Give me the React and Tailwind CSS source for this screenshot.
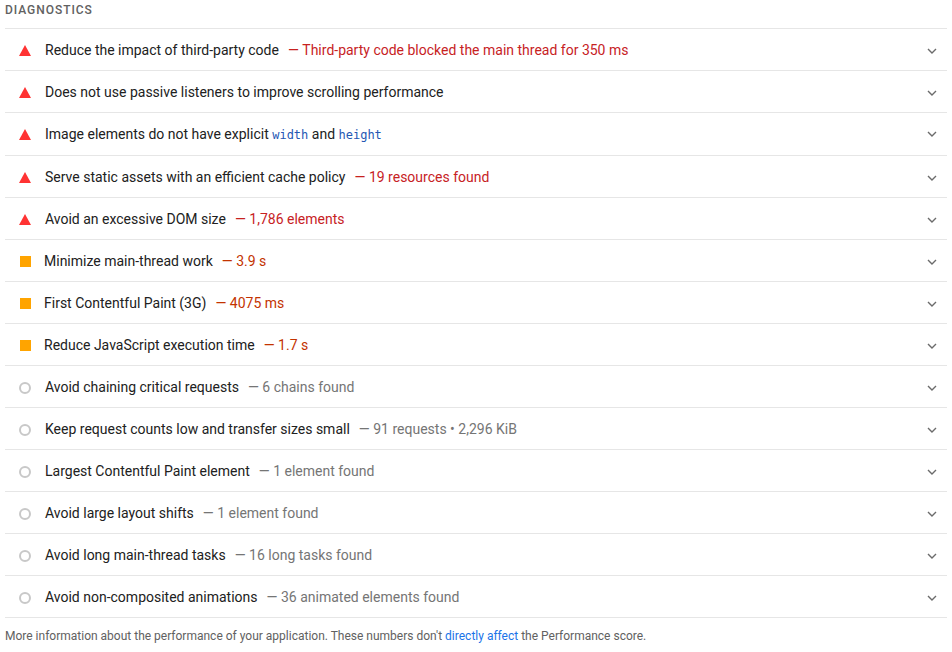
import React from 'react';

const audits = [
  { level: 'fail', title: 'Reduce the impact of third-party code', value: 'Third-party code blocked the main thread for 350 ms' },
  { level: 'fail', title: 'Does not use passive listeners to improve scrolling performance' },
  { level: 'fail', title: 'image' },
  { level: 'fail', title: 'Serve static assets with an efficient cache policy', value: '19 resources found' },
  { level: 'fail', title: 'Avoid an excessive DOM size', value: '1,786 elements' },
  { level: 'average', title: 'Minimize main-thread work', value: '3.9 s' },
  { level: 'average', title: 'First Contentful Paint (3G)', value: '4075 ms' },
  { level: 'average', title: 'Reduce JavaScript execution time', value: '1.7 s' },
  { level: 'info', title: 'Avoid chaining critical requests', value: '6 chains found' },
  { level: 'info', title: 'Keep request counts low and transfer sizes small', value: '91 requests • 2,296 KiB' },
  { level: 'info', title: 'Largest Contentful Paint element', value: '1 element found' },
  { level: 'info', title: 'Avoid large layout shifts', value: '1 element found' },
  { level: 'info', title: 'Avoid long main-thread tasks', value: '16 long tasks found' },
  { level: 'info', title: 'Avoid non-composited animations', value: '36 animated elements found' },
];

const ScoreIcon = ({ level }) => {
  if (level === 'fail') {
    return (
      <svg width="12" height="11" viewBox="0 0 12 11">
        <polygon points="6,0 12,11 0,11" fill="#ff3333" />
      </svg>
    );
  }
  if (level === 'average') {
    return <span className="block w-[11px] h-[11px] bg-[#ffa400]" />;
  }
  return <span className="block w-[12px] h-[12px] rounded-full border-2 border-[#c8c8c8]" />;
};

const Code = ({ children }) => (
  <code className="text-[12px] text-[#2457b3]" style={{ fontFamily: '"DejaVu Sans Mono", monospace' }}>
    {children}
  </code>
);

const valueColor = {
  fail: 'text-[#c7221f]',
  average: 'text-[#c33300]',
  info: 'text-[#757575]',
};

const AuditRow = ({ audit }) => {
  const isImage = audit.title === 'image';
  return (
    <div className={`${isImage ? 'h-[43px]' : 'h-[42px] pt-[2px]'} border-t border-[#e6e6e6] flex items-center pl-[14px] pr-[10px]`}>
      <span className="w-[12px] flex justify-center">
        <ScoreIcon level={audit.level} />
      </span>
      <div className={`${audit.level === 'average' ? 'ml-[13px]' : 'ml-[14px]'} flex-1 text-[14px] text-[#212121] whitespace-nowrap`}>
        {isImage ? (
          <span>
            Image elements do not have explicit <Code>width</Code> and <Code>height</Code>
          </span>
        ) : (
          <span>{audit.title}</span>
        )}
        {audit.value && (
          <span className={`ml-[9px] ${valueColor[audit.level]}`}>—&nbsp;{audit.value}</span>
        )}
      </div>
      <svg width="10" height="6" viewBox="0 0 10 6" className="shrink-0">
        <path d="M1 1 L5 5 L9 1" fill="none" stroke="#6b6b6b" strokeWidth="1.4" />
      </svg>
    </div>
  );
};

export default function App() {
  return (
    <div className="w-[952px] h-[652px] bg-white px-[5px]" style={{ fontFamily: 'Roboto, "Liberation Sans", sans-serif' }}>
      <div className="h-[28px] flex items-center pb-[8px] text-[12px] font-medium tracking-[0.08em] text-[#616161]">
        DIAGNOSTICS
      </div>
      <div>
        {audits.map((a, i) => (
          <AuditRow key={i} audit={a} />
        ))}
      </div>
      <div className="border-t border-[#e6e6e6] pt-[9px] text-[12px] text-[#616161]">
        More information about the performance of your application. These numbers don't{' '}
        <span className="text-[#1a73e8]">directly affect</span> the Performance score.
      </div>
    </div>
  );
}
